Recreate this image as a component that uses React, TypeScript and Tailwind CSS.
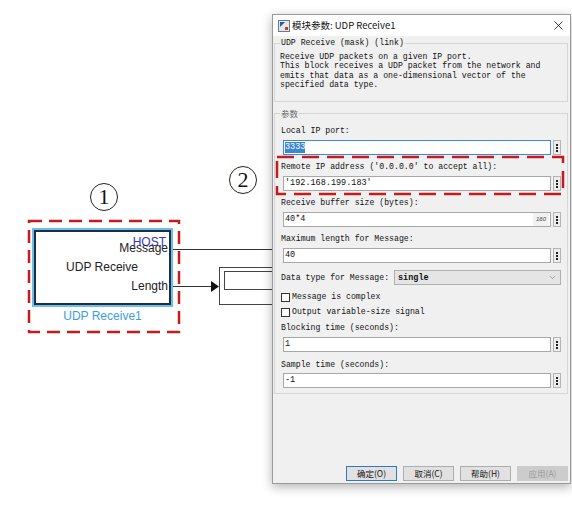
import { ChevronDown } from 'lucide-react'

const mono = "font-['Liberation_Mono',monospace]"
const cjk = "font-['Noto_Sans_CJK_SC',sans-serif]"

function MoreButton() {
  return (
    <div className="flex w-[8px] flex-col items-center justify-center gap-[1px] border border-[#b4b4b4] bg-[#ececec]">
      <span className="h-[2px] w-[2px] bg-[#222]" />
      <span className="h-[2px] w-[2px] bg-[#222]" />
      <span className="h-[2px] w-[2px] bg-[#222]" />
    </div>
  )
}

function Label({ children }: { children: string }) {
  return <p className={`${mono} h-[10px] whitespace-pre text-[8.2px] leading-[10px] text-[#111]`}>{children}</p>
}

function Field({ value, focused, hint, className = '' }: { value: string; focused?: boolean; hint?: string; className?: string }) {
  return (
    <div className={`ml-[2px] flex h-[15px] items-stretch gap-[2px] ${className}`}>
      <div
        className={`flex flex-1 items-center justify-between border bg-white pl-[1px] ${
          focused ? 'border-[#3c8ad8]' : 'border-[#a8a8a8]'
        }`}
      >
        <span className={`${mono} whitespace-pre text-[8.5px] leading-[11px] text-[#111] ${focused ? 'bg-[#3d86d4] text-white' : ''}`}>{value}</span>
        {hint && (
          <span className="mr-[1px] flex h-full items-center bg-[#f2f2f2] px-[3px] font-['Liberation_Sans',sans-serif] text-[6px] italic text-[#444]">
            {hint}
          </span>
        )}
      </div>
      <MoreButton />
    </div>
  )
}

function Check({ label, className = '' }: { label: string; className?: string }) {
  return (
    <div className={`flex h-[10px] items-center gap-[2px] ${className}`}>
      <span className="h-[9px] w-[9px] border border-[#333] bg-white" />
      <span className={`${mono} whitespace-pre text-[8.2px] leading-[10px] text-[#111]`}>{label}</span>
    </div>
  )
}

function DialogButton({ label, variant }: { label: string; variant?: 'default' | 'disabled' }) {
  const tone =
    variant === 'default'
      ? 'border-[#2a78d0] bg-[#e1e1e1] text-[#111]'
      : variant === 'disabled'
        ? 'border-[#cccccc] bg-[#cccccc] text-[#9a9a9a]'
        : 'border-[#adadad] bg-[#e1e1e1] text-[#111]'
  return (
    <div className={`${cjk} flex h-[15px] w-[51px] items-center justify-center border text-[8.5px] leading-none ${tone}`}>
      {label}
    </div>
  )
}

function Circled({ n, className }: { n: string; className: string }) {
  return (
    <div
      className={`absolute flex h-[28px] w-[28px] items-center justify-center rounded-full border border-[#222] font-['Liberation_Serif',serif] text-[22px] leading-none text-[#111] ${className}`}
    >
      {n}
    </div>
  )
}

export default function App() {
  return (
    <div className="relative h-[505px] w-[572px] overflow-hidden bg-white">
      {/* diagram wires */}
      <svg className="absolute left-0 top-0" width={572} height={505}>
        <line x1={173} y1={249.5} x2={290} y2={249.5} stroke="#333" strokeWidth={1} />
        <line x1={173} y1={286.5} x2={212} y2={286.5} stroke="#333" strokeWidth={1} />
        <polygon points="211,281 219,286.5 211,292" fill="#111" />
        <rect x={219.5} y={267.5} width={80} height={37} fill="#fff" stroke="#444" strokeWidth={1} />
        <rect x={224.5} y={271.5} width={70} height={18} fill="#fff" stroke="#444" strokeWidth={1} />
        <rect x={29} y={221} width={150} height={111} fill="none" stroke="#c41c1c" strokeWidth={2.5} strokeDasharray="13 7" />
      </svg>

      <Circled n="1" className="left-[90px] top-[183px]" />
      <Circled n="2" className="left-[229px] top-[166px]" />

      {/* UDP Receive block */}
      <div className="absolute left-[32px] top-[228px] flex w-[141px] flex-col items-center">
        <div className="h-[79px] w-full bg-[#6cbef0] p-[2px]">
          <div className="relative flex h-full flex-col items-stretch border-2 border-[#1f2f3c] bg-white pr-[1px] pt-[10px] font-['Liberation_Sans',sans-serif] text-[12px] leading-[12px] text-[#222]">
            <span className="absolute right-[3px] top-[4px] text-[#3434c8]">HOST</span>
            <span className="relative self-end">Message</span>
            <span className="mt-[7px] self-center">UDP Receive</span>
            <span className="mt-[7px] self-end">Length</span>
          </div>
        </div>
        <span className="mt-[3px] font-['Liberation_Sans',sans-serif] text-[12px] leading-[12px] text-[#3a9ee4]">UDP Receive1</span>
      </div>

      {/* Block parameters dialog */}
      <div className="absolute left-[272px] top-[14px] flex h-[470px] w-[299px] flex-col border border-[#9a9a9a] bg-[#f0f0f0] shadow-[0_3px_10px_rgba(0,0,0,0.3)]">
        <div className="flex h-[21px] items-center bg-white pl-[5px] pr-[7px]">
          <svg width={12} height={12} viewBox="0 0 12 12">
            <rect x={0.5} y={0.5} width={11} height={11} fill="#dfe7ef" stroke="#6c7a88" />
            <path d="M2 2h5L2 7z" fill="#1f5f9f" />
            <rect x={7} y={7} width={3} height={3} fill="#d23a1a" />
          </svg>
          <span className={`${cjk} ml-[2px] text-[9.5px] leading-none text-[#111]`}>模块参数: UDP Receive1</span>
          <svg className="ml-auto" width={9} height={9} viewBox="0 0 9 9">
            <path d="M0.5 0.5L8.5 8.5M8.5 0.5L0.5 8.5" stroke="#222" strokeWidth={0.9} />
          </svg>
        </div>

        <fieldset className="ml-[1px] mr-[2px] mt-[2px] border border-[#d6d6d6] px-[6px] pb-[12px] pt-[4px]">
          <legend className={`${mono} -ml-[1px] px-[1px] text-[8.2px] leading-[10px] text-[#111]`}>UDP Receive (mask) (link)</legend>
          <p className={`${mono} -ml-[1px] whitespace-pre text-[8.2px] leading-[9.33px] text-[#111]`}>
            {'Receive UDP packets on a given IP port.\nThis block receives a UDP packet from the network and\nemits that data as a one-dimensional vector of the\nspecified data type.'}
          </p>
        </fieldset>

        <fieldset className="ml-[1px] mr-[2px] mt-[6px] flex flex-col border border-[#d6d6d6] px-[6px] pb-[5px] pt-[8px]">
          <legend className={`${cjk} -ml-[1px] px-[1px] text-[8.5px] leading-[10px] text-[#666]`}>参数</legend>
          <Label>Local IP port:</Label>
          <Field value="3333" focused className="mt-[4px]" />
          <div className="mt-[7px]">
            <Label>Remote IP address ('0.0.0.0' to accept all):</Label>
          </div>
          <Field value="'192.168.199.183'" className="mt-[4px]" />
          <div className="mt-[7px]">
            <Label>Receive buffer size (bytes):</Label>
          </div>
          <Field value="40*4" hint="160" className="mt-[4px]" />
          <div className="mt-[7px]">
            <Label>Maximum length for Message:</Label>
          </div>
          <Field value="40" className="mt-[4px]" />
          <div className="mt-[7px] flex h-[15px] items-center">
            <div className="w-[113px]">
              <Label>Data type for Message:</Label>
            </div>
            <div className="flex h-full flex-1 items-center justify-between border border-[#b0b0b0] bg-[#e5e5e5] pl-[3px] pr-[3px]">
              <span className={`${mono} text-[8.5px] font-bold leading-none text-[#111]`}>single</span>
              <ChevronDown size={9} strokeWidth={1.3} color="#555" />
            </div>
          </div>
          <Check label="Message is complex" className="mt-[7px]" />
          <Check label="Output variable-size signal" className="mt-[5px]" />
          <div className="mt-[6px]">
            <Label>Blocking time (seconds):</Label>
          </div>
          <Field value="1" className="mt-[4px]" />
          <div className="mt-[8px]">
            <Label>Sample time (seconds):</Label>
          </div>
          <Field value="-1" className="mt-[3px]" />
        </fieldset>

        <div className="flex-1" />
        <div className="flex justify-end gap-[6px] pb-[2px] pr-[2px]">
          <DialogButton label="确定(O)" variant="default" />
          <DialogButton label="取消(C)" />
          <DialogButton label="帮助(H)" />
          <DialogButton label="应用(A)" variant="disabled" />
        </div>
      </div>

      {/* annotation around remote IP */}
      <svg className="absolute left-0 top-0" width={572} height={505}>
        <rect x={277} y={157} width={286} height={37} fill="none" stroke="#c41c1c" strokeWidth={2.5} strokeDasharray="17 8" />
      </svg>
    </div>
  )
}
